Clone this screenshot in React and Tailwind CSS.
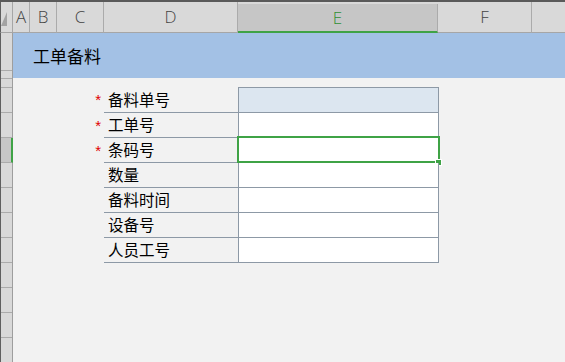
import React from 'react';

const cols = [
    { name: 'A', w: 'w-[17px]' },
    { name: 'B', w: 'w-[27px]' },
    { name: 'C', w: 'w-[47px]' },
    { name: 'D', w: 'w-[134px]' },
    { name: 'E', w: 'w-[200px]', active: true },
    { name: 'F', w: 'w-[94px]' },
];

const fields = [
    { label: '备料单号', required: true, tinted: true },
    { label: '工单号', required: true },
    { label: '条码号', required: true, selected: true },
    { label: '数量' },
    { label: '备料时间' },
    { label: '设备号' },
    { label: '人员工号' },
];

// row header cells, heights include the bottom line
const rowHeads = [
    { h: 'h-[38px]' },
    { h: 'h-[8px]' },
    { h: 'h-[9px]' },
    { h: 'h-[25px]' },
    { h: 'h-[25px]' },
    { h: 'h-[25px]', active: true },
    { h: 'h-[25px]' },
    { h: 'h-[25px]' },
    { h: 'h-[25px]' },
    { h: 'h-[25px]' },
    { h: 'h-[25px]' },
    { h: 'h-[25px]' },
    { h: 'h-[25px]' },
];

const ColumnHeader = () => (
    <div className="flex h-[31px] shrink-0 bg-[#d9d9d9] font-['Open_Sans',sans-serif] font-light text-[17px] text-[#444]">
        <div className="w-[13px] shrink-0 relative border-l border-l-[#5f5f5f] border-r border-r-[#a6a6a6] border-b border-b-[#a6a6a6]">
            <svg className="absolute left-0 top-[10px]" width="6" height="14" viewBox="0 0 6 14">
                <polygon points="6,0 6,14 0,14" fill="#a3a3a3" />
            </svg>
        </div>
        {cols.map(c => (
            <div
                key={c.name}
                className={`${c.w} shrink-0 flex items-center justify-center border-r border-r-[#ababab] ${c.active ? 'bg-[#c6c6c6] border-b-2 border-b-[#3fa346] text-[#2f8f34] mt-[2px]' : 'border-b border-b-[#a6a6a6]'}`}
            >
                {c.name}
            </div>
        ))}
        <div className="flex-1 border-b border-b-[#a6a6a6]"></div>
    </div>
);

const RowHeader = () => (
    <div className="w-[13px] shrink-0 flex flex-col border-l border-l-[#5f5f5f] border-r border-r-[#9e9e9e] bg-[#d9d9d9]">
        {rowHeads.map((r, i) => (
            <div
                key={i}
                className={`${r.h} shrink-0 border-b border-b-[#ababab] ${r.active ? 'bg-[#c6c6c6] -mr-px border-r-2 border-r-[#3fa346]' : ''}`}
            ></div>
        ))}
    </div>
);

const FormRow = ({ field, first }) => (
    <div className={`flex ${first ? 'h-[26px]' : 'h-[25px]'}`}>
        <div className="w-[91px] shrink-0 flex justify-end pr-[3px] pt-[5px] text-[15px] leading-none text-[#e00000] font-['Liberation_Sans',sans-serif]">
            {field.required ? '*' : ''}
        </div>
        <div className={`w-[134px] shrink-0 flex items-center pl-[4px] border-b border-b-[#8d99a6] ${first ? 'border-t border-t-transparent' : ''}`}>
            {field.label}
        </div>
        <div
            className={`w-[201px] shrink-0 relative border-x border-b border-[#8d99a6] ${first ? 'border-t' : ''} ${field.tinted ? 'bg-[#dce6f0]' : 'bg-white'}`}
        >
            {field.selected && (
                <>
                    <div className="absolute -left-[2px] -top-[2px] -right-[2px] -bottom-px border-2 border-[#3fa346]"></div>
                    <div className="absolute -right-[4px] -bottom-[4px] w-[7px] h-[7px] bg-[#3fa346] border border-white"></div>
                </>
            )}
        </div>
    </div>
);

const App = () => {
    return (
        <div className="w-[565px] h-[362px] overflow-hidden flex flex-col bg-[#f2f2f2] font-['Noto_Sans_CJK_SC',sans-serif] text-black">
            <div className="h-[2px] shrink-0 bg-[#5a5a5a]"></div>
            <ColumnHeader />
            <div className="flex flex-1 min-h-0">
                <RowHeader />
                <div className="flex-1 flex flex-col">
                    <div className="h-[45px] shrink-0 bg-[#a3c1e5] flex items-center pl-[20px] text-[17px]">
                        工单备料
                    </div>
                    <div className="pt-[9px] text-[15.5px]">
                        {fields.map((f, i) => (
                            <FormRow key={f.label} field={f} first={i === 0} />
                        ))}
                    </div>
                </div>
            </div>
        </div>
    );
};

export default App;
